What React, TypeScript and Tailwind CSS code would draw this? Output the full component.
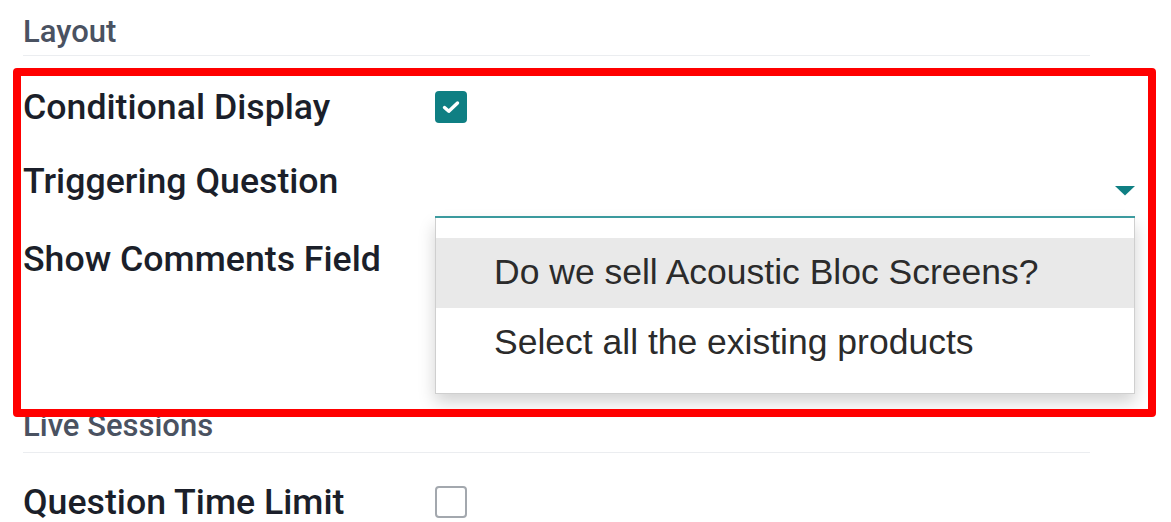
import React from "react";

const roboto = { fontFamily: "Roboto, 'Noto Sans', sans-serif" };
const label = "w-[412px] shrink-0 text-[35.7px] leading-[46px] font-medium text-[#1b1f2a]";

export default function App() {
  return (
    <div className="relative w-[1171px] h-[522px] overflow-hidden bg-white" style={roboto}>
      <div className="pl-[23px] w-full">
        {/* Layout header */}
        <div className="mt-[12px] h-[40px] leading-[40px] text-[31px] font-medium text-[#4a5261]">Layout</div>
        <div className="mt-[3px] h-[1px] w-[1067px] bg-[#ebedf0]" />

        {/* Row 1 */}
        <div className="mt-[28px] flex h-[46px] items-center">
          <div className={label}>Conditional Display</div>
          <div className="flex h-[32px] w-[32px] shrink-0 items-center justify-center rounded-[4px] bg-[#0f7f83]">
            <svg width="18" height="14" viewBox="0 0 18 14">
              <path d="M2.5 7.5 L6.8 11.2 L15.5 3" fill="none" stroke="white" strokeWidth="3.4" strokeLinecap="round" strokeLinejoin="round" />
            </svg>
          </div>
        </div>

        {/* Row 2 */}
        <div className="mt-[28px] flex h-[60px]">
          <div className={label}>Triggering Question</div>
          <div className="relative w-[700px] shrink-0">
            <div className="flex h-[60px] items-center justify-end border-b-2 border-[#3d9ea2]">
              <svg width="20" height="10" viewBox="0 0 20 10" className="mt-[8px]">
                <path d="M0 0 L20 0 L10 9.5 Z" fill="#0f7f83" />
              </svg>
            </div>
            {/* Dropdown menu */}
            <div
              className="absolute left-0 top-[60px] z-10 w-[700px] border border-t-0 border-[#cfcfcf] bg-white pt-[20px] pb-[15px] shadow-[0_8px_16px_rgba(0,0,0,0.18)]"
              style={{ fontFamily: "'Liberation Sans', Arial, sans-serif" }}
            >
              <div className="flex h-[70px] items-center bg-[#e9e9e9] pl-[58px] text-[35.5px] text-[#2b2b2b]">
                Do we sell Acoustic Bloc Screens?
              </div>
              <div className="flex h-[70px] items-center pl-[58px] text-[35.5px] text-[#2b2b2b]">
                Select all the existing products
              </div>
            </div>
          </div>
        </div>

        {/* Row 3 */}
        <div className="mt-[18px] flex h-[46px] items-center">
          <div className={label}>Show Comments Field</div>
        </div>

        {/* Live Sessions header */}
        <div className="mt-[124px] h-[40px] leading-[40px] text-[31px] font-medium text-[#4a5261]">Live Sessions</div>
        <div className="mt-[6px] h-[1px] w-[1067px] bg-[#ebedf0]" />

        {/* Row 4 */}
        <div className="mt-[26px] flex h-[46px] items-center">
          <div className={label}>Question Time Limit</div>
          <div className="h-[32px] w-[32px] shrink-0 rounded-[4px] border-2 border-[#a3a8ae] bg-white" />
        </div>
      </div>

      {/* Red annotation box */}
      <div className="pointer-events-none absolute left-[13px] top-[68px] z-20 h-[349px] w-[1143px] rounded-[4px] border-[8px] border-[#ff0000]" />
    </div>
  );
}
